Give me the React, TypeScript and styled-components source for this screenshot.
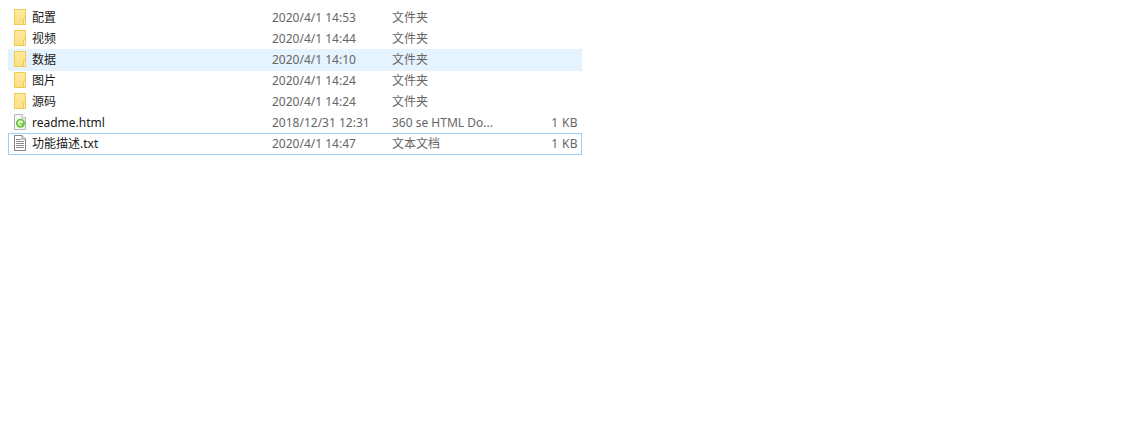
import React from "react";
import styled, { createGlobalStyle } from "styled-components";

const Global = createGlobalStyle`
  html, body { margin: 0; padding: 0; background: #fff; }
  body { font-family: "Noto Sans", "Noto Sans CJK SC", sans-serif; font-size: 12px; }
`;

const Page = styled.div`
  width: 580px;
  margin-left: 8px;
`;

const HeaderEdge = styled.div`
  height: 1px;
  margin-bottom: 6px;
  display: grid;
  grid-template-columns: 259px 120px 120px 80px;
`;

const HeaderTick = styled.div`
  border-right: 1px solid #e5e5e5;
`;

const List = styled.div`
  width: 574px;
  display: flex;
  flex-direction: column;
`;

const Row = styled.div<{ $state?: "hover" | "focus" }>`
  height: 22px;
  margin-bottom: -1px;
  box-sizing: border-box;
  display: grid;
  grid-template-columns: 264px 120px 120px 1fr;
  align-items: center;
  line-height: 20px;
  white-space: nowrap;
  color: #666;
  background: ${(p) => (p.$state === "hover" ? "#e5f3ff" : "transparent")};
  box-shadow: ${(p) => (p.$state === "focus" ? "inset 0 0 0 1px #99d1ff" : "none")};

  &:last-child {
    margin-bottom: 0;
  }
`;

const NameCell = styled.div`
  display: flex;
  align-items: center;
  gap: 6px;
  padding-left: 6px;
  color: #1a1a1a;
`;

const Cell = styled.div`
  overflow: hidden;
`;

const SizeCell = styled.div`
  text-align: right;
  padding-right: 4px;
  letter-spacing: 0.4px;
`;

const IconBox = styled.svg`
  width: 12px;
  height: 16px;
  margin-bottom: 2px;
  flex: none;
`;

const FolderIcon = () => (
  <IconBox viewBox="0 0 12 16">
    <defs>
      <linearGradient id="folderFill" x1="0" y1="0" x2="0" y2="1">
        <stop offset="0" stopColor="#fee99f" />
        <stop offset="1" stopColor="#fcdf85" />
      </linearGradient>
    </defs>
    <rect x="0.5" y="0.5" width="11" height="15" fill="url(#folderFill)" stroke="#eecb52" />
    <path d="M9.5 15V9.5H11" fill="none" stroke="#eecb52" />
    <rect x="10" y="10" width="1" height="5" fill="#fff1bd" />
  </IconBox>
);

const HtmlIcon = () => (
  <IconBox viewBox="0 0 12 16">
    <path d="M0.5 0.5H8L11.5 4V15.5H0.5Z" fill="#f6f6f6" stroke="#b5b5b5" />
    <path d="M8 0.5V4H11.5" fill="#fff" stroke="#b5b5b5" />
    <circle cx="6.5" cy="9.2" r="4.5" fill="#66c72e" />
    <path d="M4.5 8.8H8.6M8.6 8.8A2.1 2.1 0 1 0 7.9 10.6" fill="none" stroke="#fff" strokeWidth="1.1" />
  </IconBox>
);

const TextIcon = () => (
  <IconBox viewBox="0 0 12 16">
    <path d="M0.5 0.5H8L11.5 4V15.5H0.5Z" fill="#fff" stroke="#858585" />
    <path d="M8 0.5V4H11.5" fill="#eee" stroke="#858585" />
    <path d="M2 4.5H7M2 6.5H10M2 8.5H10M2 10.5H10M2 12.5H10" stroke="#8a8a8a" />
  </IconBox>
);

type Kind = "folder" | "html" | "text";
type FileRow = {
  name: string;
  date: string;
  type: string;
  size?: string;
  kind: Kind;
  state?: "hover" | "focus";
};

const rows: FileRow[] = [
  { name: "配置", date: "2020/4/1 14:53", type: "文件夹", kind: "folder" },
  { name: "视频", date: "2020/4/1 14:44", type: "文件夹", kind: "folder" },
  { name: "数据", date: "2020/4/1 14:10", type: "文件夹", kind: "folder", state: "hover" },
  { name: "图片", date: "2020/4/1 14:24", type: "文件夹", kind: "folder" },
  { name: "源码", date: "2020/4/1 14:24", type: "文件夹", kind: "folder" },
  { name: "readme.html", date: "2018/12/31 12:31", type: "360 se HTML Do...", size: "1 KB", kind: "html" },
  { name: "功能描述.txt", date: "2020/4/1 14:47", type: "文本文档", size: "1 KB", kind: "text", state: "focus" },
];

const icons: Record<Kind, React.ReactNode> = {
  folder: <FolderIcon />,
  html: <HtmlIcon />,
  text: <TextIcon />,
};

export default function App() {
  return (
    <>
      <Global />
      <Page>
        <HeaderEdge>
          <HeaderTick />
          <HeaderTick />
          <HeaderTick />
          <HeaderTick />
        </HeaderEdge>
        <List>
          {rows.map((r) => (
            <Row key={r.name} $state={r.state}>
              <NameCell>
                {icons[r.kind]}
                <span>{r.name}</span>
              </NameCell>
              <Cell>{r.date}</Cell>
              <Cell>{r.type}</Cell>
              <SizeCell>{r.size}</SizeCell>
            </Row>
          ))}
        </List>
      </Page>
    </>
  );
}
